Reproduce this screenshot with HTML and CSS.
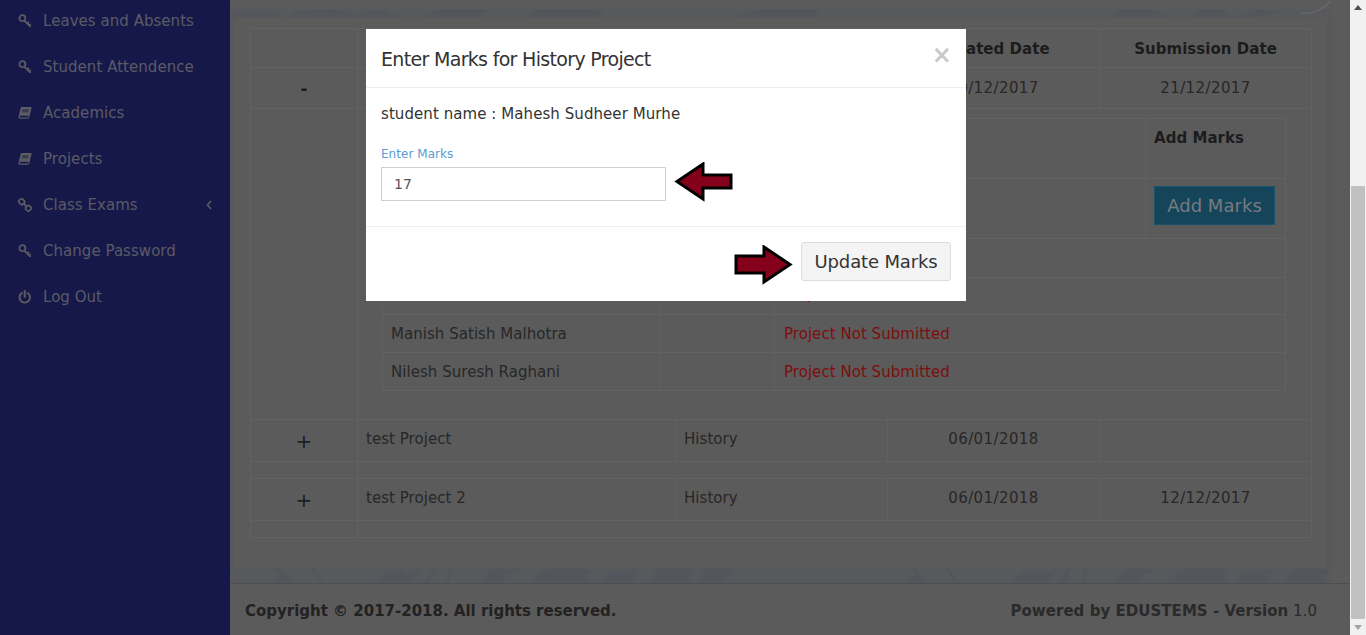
FILE: index.html
```html
<!DOCTYPE html>
<html lang="en">
<head>
<meta charset="utf-8">
<title>Project Marks</title>
<link rel="stylesheet" href="styles.css">
</head>
<body>
<svg class="defs" width="0" height="0" aria-hidden="true">
  <defs>
    <symbol id="i-key" viewBox="0 0 16 16">
      <path d="M1.6 4.8a3.4 3.4 0 1 1 6.8 0a3.4 3.4 0 1 1-6.8 0z" fill="none" stroke="currentColor" stroke-width="2"/>
      <path d="M7 7.4l7.4 7.4M10.6 11l1.9-1.9M12.8 13.2l1.7-1.7" fill="none" stroke="currentColor" stroke-width="2"/>
    </symbol>
    <symbol id="i-book" viewBox="0 0 16 16">
      <path d="M4.2 1h10.6c.6 0 .8.4.7.9l-2.6 11c-.2.9-.8 1.6-1.9 1.6H2.4C1 14.5.2 13.6.6 12.2L3 2.2C3.2 1.5 3.6 1 4.2 1zM5.2 4l-.2 1h7.2l.2-1zM4.6 6.2l-.2 1h7.2l.2-1zM3 11.2c-.8 0-1 .5-1 1 0 .6.4 1 1 1h8.2c.4 0 .7-.2.8-.6l.2-1.4z" fill="currentColor" fill-rule="evenodd"/>
    </symbol>
    <symbol id="i-link" viewBox="0 0 16 16">
      <path d="M5.6 1.6l1.4 1.4a2.2 2.2 0 0 1 0 3.1l-.9.9a2.2 2.2 0 0 1-3.1 0L1.6 5.6a2.2 2.2 0 0 1 0-3.1l.9-.9a2.2 2.2 0 0 1 3.1 0zM13.4 9.2l1 1a2.2 2.2 0 0 1 0 3.1l-1 1a2.2 2.2 0 0 1-3.1 0l-1-1a2.2 2.2 0 0 1 0-3.1l1-1a2.2 2.2 0 0 1 3.1 0zM5.6 5.6l4.8 4.8" fill="none" stroke="currentColor" stroke-width="1.9"/>
    </symbol>
    <symbol id="i-power" viewBox="0 0 16 16">
      <path d="M4.4 3.4a6 6 0 1 0 6.6 0" fill="none" stroke="currentColor" stroke-width="2.2" stroke-linecap="round"/>
      <path d="M7.7 1.2v6.6" fill="none" stroke="currentColor" stroke-width="2.4" stroke-linecap="round"/>
    </symbol>
    <g id="grain">
      <path d="M146 15c6-9 16-14 26-13l6 5 14-6-10 14zM194 15l8-14 4 0-6 14zM250 15l10-14h30l-12 6-6 8zM300 15l16-14h50l-10 6 8 8zM370 15l8-10 30-4-6 14zM420 15l6-14h40l-8 8 4 6zM470 15l4-14h30l-10 14z" fill="#53565d"/>
      <path d="M40 15l10-9 8 3 8 6zM44 0l8 8 4-1-6-7zM80 0l10 15h4L84 0zM220 0l-4 15h3l4-15z" fill="#54565c"/>
    </g>
  </defs>
</svg>

<div class="page">
  <aside class="sidebar">
    <ul class="menu">
      <li class="menu-item"><svg class="menu-icon"><use href="#i-key"/></svg><span>Leaves and Absents</span></li>
      <li class="menu-item"><svg class="menu-icon"><use href="#i-key"/></svg><span>Student Attendence</span></li>
      <li class="menu-item"><svg class="menu-icon"><use href="#i-book"/></svg><span>Academics</span></li>
      <li class="menu-item"><svg class="menu-icon"><use href="#i-book"/></svg><span>Projects</span></li>
      <li class="menu-item"><svg class="menu-icon"><use href="#i-link"/></svg><span>Class Exams</span>
        <svg class="menu-chevron" viewBox="0 0 6 10"><path d="M5 1L1.5 5 5 9" fill="none" stroke="currentColor" stroke-width="1.6"/></svg></li>
      <li class="menu-item"><svg class="menu-icon"><use href="#i-key"/></svg><span>Change Password</span></li>
      <li class="menu-item"><svg class="menu-icon"><use href="#i-power"/></svg><span>Log Out</span></li>
    </ul>
  </aside>

  <main class="main">
    <div class="content">
      <svg class="band band-top" viewBox="0 0 1102 18" preserveAspectRatio="none" aria-hidden="true">
        <rect y="9" width="1102" height="9" fill="#57595d"/>
        <path d="M60 18l6-7 40-2 20 5 30-5 12 9zM190 18l20-9h50l-10 9zM300 18l4-9h70l-8 9zM500 18l30-9h60l-4 9zM880 18l6-9h40l8 9zM960 18l8-9h24l8 9zM1000 18l30-9 20 3-30 6z" fill="#54565c"/>
        <rect x="0" y="9" width="50" height="9" fill="#55575c"/>
        <path d="M1070 13q18 2 31-12" fill="none" stroke="#6a6a6a" stroke-width="1.2"/>
      </svg>
      <div class="panel">
        <table class="projects">
          <colgroup>
            <col class="c1"><col class="c2"><col class="c3"><col class="c4"><col class="c5">
          </colgroup>
          <tr class="r-head">
            <th></th><th></th><th></th><th class="date">Created Date</th><th>Submission Date</th>
          </tr>
          <tr class="r-main r-first">
            <td class="toggle minus">-</td><td></td><td></td><td class="date">10/12/2017</td><td class="date">21/12/2017</td>
          </tr>
          <tr class="r-detail">
            <td></td>
            <td colspan="4" class="detail-cell">
              <table class="students">
                <colgroup>
                  <col class="s1"><col class="s2"><col class="s3"><col class="s4">
                </colgroup>
                <tr class="s-head">
                  <th></th><th></th><th></th><th>Add Marks</th>
                </tr>
                <tr class="s-action">
                  <td></td><td></td><td></td>
                  <td><span class="btn-add">Add Marks</span></td>
                </tr>
                <tr class="s-row s-tall"><td></td><td></td><td colspan="2"></td></tr>
                <tr class="s-row s-short"><td></td><td></td><td colspan="2" class="missing">Project Not Submitted</td></tr>
                <tr class="s-row"><td>Manish Satish Malhotra</td><td></td><td colspan="2" class="missing">Project Not Submitted</td></tr>
                <tr class="s-row"><td>Nilesh Suresh Raghani</td><td></td><td colspan="2" class="missing">Project Not Submitted</td></tr>
              </table>
            </td>
          </tr>
          <tr class="r-main">
            <td class="toggle">+</td><td>test Project</td><td>History</td><td class="date">06/01/2018</td><td></td>
          </tr>
          <tr class="r-gap"><td></td><td colspan="4"></td></tr>
          <tr class="r-main">
            <td class="toggle">+</td><td>test Project 2</td><td>History</td><td class="date">06/01/2018</td><td class="date">12/12/2017</td>
          </tr>
          <tr class="r-gap"><td></td><td colspan="4"></td></tr>
        </table>
      </div>
      <svg class="band band-bottom" viewBox="0 0 1102 15" preserveAspectRatio="none" aria-hidden="true">
        <rect width="1102" height="15" fill="#58595c"/>
        <use href="#grain"/>
        <use href="#grain" x="635"/>
      </svg>
    </div>
    <footer class="footer">
      <strong class="copy">Copyright © 2017-2018. All rights reserved.</strong>
      <span><strong>Powered by EDUSTEMS - Version</strong> 1.0</span>
    </footer>
  </main>

  <div class="scrollbar" aria-hidden="true">
    <span class="sb-arrow sb-up"></span>
    <span class="sb-thumb"></span>
    <span class="sb-arrow sb-down"></span>
  </div>
</div>

<section class="modal">
  <header class="modal-header">
    <h4 class="modal-title">Enter Marks for History Project</h4>
    <span class="modal-close">×</span>
  </header>
  <div class="modal-body">
    <p class="student">student name : Mahesh Sudheer Murhe</p>
    <label class="field-label" for="marks">Enter Marks</label>
    <input class="field-input" id="marks" type="text" value="17">
  </div>
  <footer class="modal-footer">
    <button class="btn-update" type="button">Update Marks</button>
  </footer>
  <svg class="arrow arrow-left" viewBox="0 0 60 40" aria-hidden="true"><path d="M3 19.5L29 2v11h28v13H29v11z"/></svg>
  <svg class="arrow arrow-right" viewBox="0 0 60 40" aria-hidden="true"><path d="M57 19.5L31 2v9H3v17h28v9z"/></svg>
</section>
</body>
</html>
```

FILE: styles.css
```css
* { box-sizing: border-box; }
html, body { margin: 0; height: 100%; overflow: hidden; }
body {
  font-family: "DejaVu Sans", Verdana, sans-serif;
  font-size: 15px;
  letter-spacing: 0.04px;
  color: #272727;
  background: #5b5b5b;
}
.defs { position: absolute; }
.page { display: flex; height: 635px; }

/* sidebar */
.sidebar { flex: 0 0 230px; background: #161849; color: #5a5b66; overflow: hidden; }
.menu { list-style: none; margin: -2px 0 0; padding: 0; }
.menu-item { display: flex; align-items: center; height: 46px; padding: 0 18px; gap: 11px; }
.menu-icon { width: 14px; height: 14px; flex: none; color: #5c5c62; }
.menu-chevron { width: 6px; height: 10px; margin-left: auto; }

/* main */
.main { flex: 1; display: flex; flex-direction: column; min-width: 0; }
.content { flex: 1; width: 1102px; display: flex; flex-direction: column; }
.band { display: block; flex: none; width: 100%; }
.band-top { height: 18px; }
.band-bottom { height: 15px; }
.panel {
  flex: 1;
  padding: 10px 15px 0;
  background: #5b5b5b;
  background-clip: padding-box;
  border-left: 5px solid #56585c;
  border-right: 5px solid #56585c;
}

/* outer table */
.projects, .students { border-collapse: collapse; table-layout: fixed; }
.projects { width: 1061px; }
.projects td, .projects th, .students td, .students th { border: 1px solid #626262; padding: 8px; vertical-align: top; line-height: 22px; text-align: left; }
.projects th { font-weight: 700; text-align: center; color: #1c1c1c; padding: 9px 8px 7px; }
.c1 { width: 107px; } .c2 { width: 318px; } .c3 { width: 212px; } .c4 { width: 212px; } .c5 { width: 212px; }
.r-head { height: 39px; }
.r-main { height: 42px; }
.r-first { height: 41px; }
.projects .r-first td { padding-top: 9px; padding-bottom: 7px; }
.r-gap { height: 17px; }
.projects .r-gap td { padding: 0; }
.projects .date { text-align: center; }
.projects td.date { letter-spacing: 0.4px; }
.projects td.toggle { text-align: center; font-size: 20px; line-height: 24px; color: #1e1e1e; padding: 9px 8px 0; }
.projects .r-first td.minus { font-weight: 700; font-size: 17px; padding: 9px 8px 0; }

/* nested table */
.projects .detail-cell { padding: 9px 25px 28px 24px; }
.students { width: 903px; }
.s1 { width: 277px; } .s2 { width: 115px; } .s3 { width: 371px; } .s4 { width: 140px; }
.students th { color: #1c1c1c; font-weight: 700; text-align: left; padding: 8px; }
.s-head { height: 60px; }
.s-action { height: 60px; }
.s-row { height: 38px; }
.s-tall { height: 39px; }
.s-short { height: 37px; }
.students .s-action td { padding: 7px 8px; }
.students .s-row td { padding: 8px 8px 6px; line-height: 22px; }
.students .s-short td { padding: 5px 8px 9px; }
.students td.missing { color: #7e0e0e; padding-left: 9px; }
.btn-add {
  display: block;
  width: 121px;
  height: 39px;
  background: #15455a;
  border: 1px solid #17546b;
  color: #777b80;
  font-size: 18px;
  line-height: 37px;
  text-align: center;
}

/* footer */
.footer {
  flex: 0 0 52px;
  display: flex;
  justify-content: space-between;
  align-items: center;
  padding: 2px 33px 0 15px;
  border-top: 1px solid #4d4d52;
  color: #222;
  background: #5b5b5b;
}
.footer strong { font-weight: 700; }
.footer .copy { letter-spacing: -0.01px; }
.footer span { color: #2a2a2a; }

/* scrollbar */
.scrollbar { flex: 0 0 16px; position: relative; background: #f1f1f1; }
.sb-thumb { position: absolute; left: 1px; right: 1px; top: 186px; height: 433px; background: #c1c1c1; }
.sb-arrow { position: absolute; left: 4px; width: 0; height: 0; border-left: 4px solid transparent; border-right: 4px solid transparent; }
.sb-up { top: 5px; border-bottom: 5px solid #505050; }
.sb-down { bottom: 5px; border-top: 5px solid #a3a3a3; }

/* modal */
.modal {
  position: absolute;
  left: 366px;
  top: 29px;
  width: 600px;
  height: 272px;
  background: #fff;
  color: #333;
}
.modal-header {
  display: flex;
  justify-content: space-between;
  height: 59px;
  padding: 15px 14px 0 15px;
  border-bottom: 1px solid #eee;
}
.modal-title { margin: 0; font-weight: 400; font-size: 19px; line-height: 30px; letter-spacing: -0.68px; color: #333; }
.modal-close { font-size: 24px; line-height: 22px; font-weight: 700; color: #c9c9c9; }
.modal-body { height: 139px; padding: 15px; border-bottom: 1px solid #f0f0f0; }
.student { margin: 0 0 21px; line-height: 22px; font-size: 15px; letter-spacing: 0.07px; color: #333; }
.field-label { display: block; font-size: 12px; line-height: 16px; color: #5b9bd0; margin-bottom: 5px; }
.field-input {
  display: block;
  width: 285px;
  height: 34px;
  padding: 0 12px;
  border: 1px solid #ccd0d6;
  font: inherit;
  font-size: 14px;
  color: #555;
  border-radius: 0;
  outline: none;
}
.modal-footer { display: flex; justify-content: flex-end; padding: 15px; }
.btn-update {
  width: 150px;
  height: 39px;
  background: #f4f4f4;
  border: 1px solid #ddd;
  border-radius: 3px;
  font-family: inherit;
  font-size: 18px;
  letter-spacing: -0.15px;
  color: #333;
  padding: 0;
}
.arrow { position: absolute; width: 60px; height: 40px; }
.arrow path { fill: #85001a; stroke: #000; stroke-width: 3; }
.arrow-left { left: 308px; top: 133px; }
.arrow-right { left: 367px; top: 216px; }
```
